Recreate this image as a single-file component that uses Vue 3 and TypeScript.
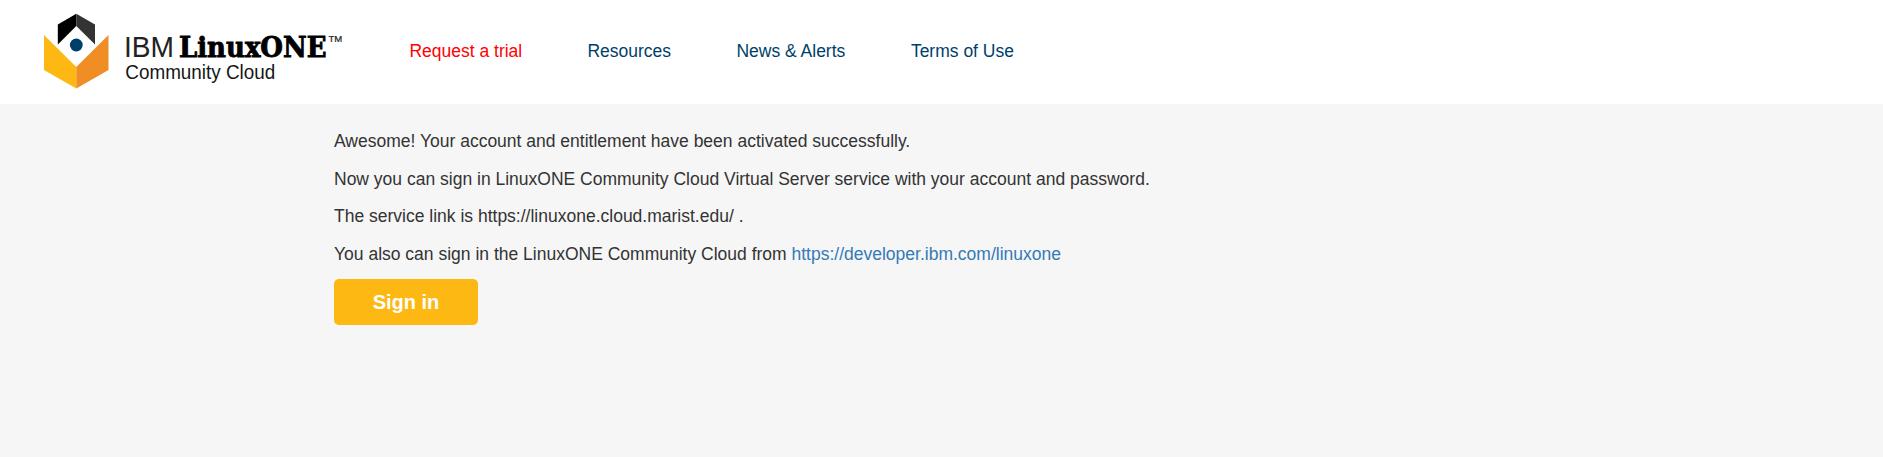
<script setup lang="ts">
interface NavItem {
  label: string
  width: number
  active?: boolean
}

const navItems: NavItem[] = [
  { label: 'Request a trial', width: 113, active: true },
  { label: 'Resources', width: 84 },
  { label: 'News & Alerts', width: 109.5 },
  { label: 'Terms of Use', width: 103 },
]

const messages: string[] = [
  'Awesome! Your account and entitlement have been activated successfully.',
  'Now you can sign in LinuxONE Community Cloud Virtual Server service with your account and password.',
  'The service link is https://linuxone.cloud.marist.edu/ .',
]
</script>

<template>
  <div class="page">
    <header class="header">
      <svg class="logo" width="320" height="90" viewBox="36 8 320 90" role="img" aria-label="IBM LinuxONE Community Cloud">
        <polygon points="76.3,13.8 57.8,24.5 57.8,44.5 76.3,26" fill="#000" />
        <polygon points="76.3,13.8 95,24.5 95,44.5 76.3,26" fill="#333" />
        <polygon points="44,35 76.3,67 76.3,88.5 44,70" fill="#fdb813" />
        <polygon points="108.5,35 76.3,67 76.3,88.5 108.5,70" fill="#f08d24" />
        <circle cx="76.3" cy="45" r="6.4" fill="#003f69" />
        <text class="thin" x="124" y="56.8" font-size="29.4" textLength="50" lengthAdjust="spacingAndGlyphs">IBM</text>
        <text class="slab" x="179" y="56.6" font-size="28" textLength="147.5" lengthAdjust="spacingAndGlyphs">LinuxONE</text>
        <text class="mark" x="328.5" y="41.8" font-size="8.6" textLength="13.8" lengthAdjust="spacingAndGlyphs">TM</text>
        <text class="sub" x="125.3" y="79" font-size="20" textLength="150" lengthAdjust="spacingAndGlyphs">Community Cloud</text>
      </svg>
      <nav class="nav">
        <a
          v-for="item in navItems"
          :key="item.label"
          class="nav-link"
          :class="{ active: item.active }"
          :style="{ width: item.width + 'px' }"
        >{{ item.label }}</a>
      </nav>
    </header>
    <main class="content">
      <p v-for="line in messages" :key="line">{{ line }}</p>
      <p>You also can sign in the LinuxONE Community Cloud from <a class="link">https://developer.ibm.com/linuxone</a></p>
      <button class="sign-in" type="button">Sign in</button>
    </main>
  </div>
</template>

<style>
body {
  margin: 0;
  background: #f6f6f6;
}
</style>

<style scoped>
.page {
  min-height: 457px;
  background: #f6f6f6;
  color: #333;
  font-family: "Liberation Sans", Arial, sans-serif;
  font-size: 17.5px;
  line-height: 25px;
}
.header {
  display: flex;
  box-sizing: border-box;
  height: 104px;
  padding: 8px 36px 0;
  background: #fff;
}
.logo {
  flex: none;
}
.thin,
.mark,
.sub {
  font-family: "Liberation Sans", Arial, sans-serif;
}
.thin {
  fill: #222;
}
.mark {
  fill: #222;
  stroke: #222;
  stroke-width: 0.2;
}
.sub {
  fill: #151515;
}
.slab {
  font-family: "DejaVu Serif", serif;
  font-weight: 700;
  fill: #000;
  stroke: #000;
  stroke-width: 0.9;
}
.nav {
  display: flex;
  gap: 65px;
  padding: 31px 0 0 53.4px;
}
.nav-link {
  color: #003f69;
  white-space: nowrap;
}
.nav-link.active {
  color: #f00;
}
.content {
  padding: 25px 0 0 334px;
}
p {
  margin: 0 0 12.5px;
}
.link {
  color: #337ab7;
}
.sign-in {
  display: block;
  width: 144px;
  height: 46px;
  padding: 0;
  border: 0;
  border-radius: 5px;
  background: #fdb813;
  color: #fff;
  font: 700 20px/46px "Liberation Sans", Arial, sans-serif;
}
</style>
